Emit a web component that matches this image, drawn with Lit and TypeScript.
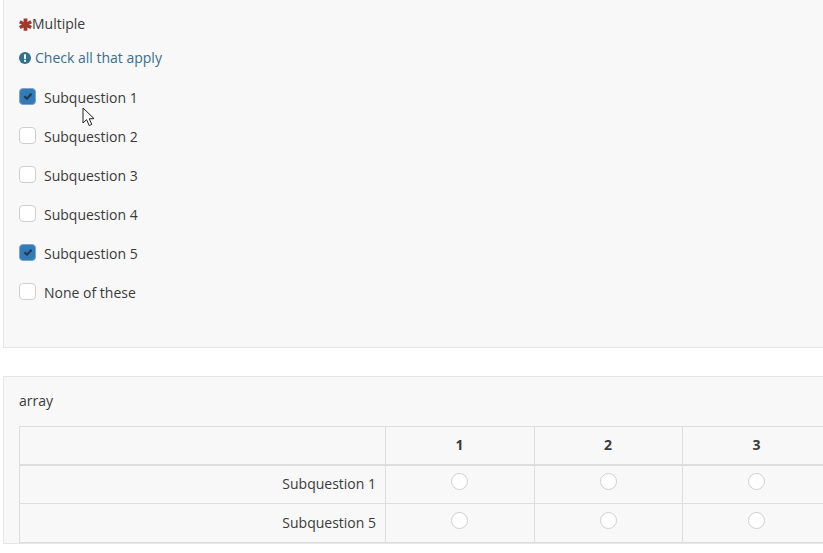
import { html, css, LitElement, svg } from 'lit';
import { customElement } from 'lit/decorators.js';

const choices = [
    { label: 'Subquestion 1', checked: true },
    { label: 'Subquestion 2', checked: false },
    { label: 'Subquestion 3', checked: false },
    { label: 'Subquestion 4', checked: false },
    { label: 'Subquestion 5', checked: true },
    { label: 'None of these', checked: false },
];

const arrayRows = ['Subquestion 1', 'Subquestion 5'];
const arrayCols = ['1', '2', '3'];

const checkMark = svg`<path d="M2.400 6.200 L4.900 8.700 L9.600 3.700" fill="none" stroke="#1d3a56" stroke-width="2.200"/>`;

@customElement('app-root')
export class AppRoot extends LitElement {
    static styles = css`
    :host {
        display: block;
        position: relative;
        width: 823px;
        height: 553px;
        overflow: hidden;
        background: #fff;
        color: #3b3b3b;
        font-family: "Open Sans", sans-serif;
        font-size: 14px;
        line-height: 20px;
    }
    .page {
        display: flex;
        flex-direction: column;
        gap: 28px;
        width: 900px;
        margin-left: 3px;
    }
    .panel {
        background: #f8f8f8;
        border: 1px solid #e6e6e6;
        box-sizing: border-box;
    }
    .multiple {
        border-top: none;
        height: 348px;
        padding: 14px 15px 0;
    }
    .title {
        display: flex;
        align-items: center;
    }
    .star {
        color: #a5362c;
        width: 13px;
        height: 13px;
        display: block;
    }
    .help {
        display: flex;
        align-items: center;
        gap: 4px;
        margin-top: 14px;
        color: #3a6f8c;
    }
    .help svg {
        width: 12px;
        height: 12px;
        display: block;
    }
    .choices {
        display: flex;
        flex-direction: column;
        gap: 19px;
        margin-top: 20px;
    }
    .choice {
        display: flex;
        align-items: center;
        gap: 8px;
    }
    .box {
        width: 17px;
        height: 17px;
        box-sizing: border-box;
        border: 1px solid #cfcfcf;
        border-radius: 4px;
        background: #fff;
        margin-top: -4px;
        display: flex;
        align-items: center;
        justify-content: center;
    }
    .box.on {
        background: #337ab7;
        border-color: #7aa5cc;
    }
    .box svg {
        width: 12px;
        height: 12px;
        display: block;
    }
    .array {
        padding: 14px 15px 0;
        height: 168px;
    }
    table {
        border-collapse: collapse;
        table-layout: fixed;
        width: 812px;
        margin-top: 15px;
    }
    th, td {
        border: 1px solid #ddd;
        padding: 0 1px 0 0;
        box-sizing: border-box;
    }
    th {
        height: 38px;
        border-bottom-width: 2px;
        font-weight: 700;
        font-size: 14px;
        text-align: center;
        padding-bottom: 1px;
    }
    td {
        height: 39px;
        text-align: center;
    }
    .name {
        text-align: right;
        padding: 0 9px 0 0;
    }
    .radio {
        display: block;
        width: 17px;
        height: 17px;
        box-sizing: border-box;
        margin: -5px auto 0;
        border: 1px solid #cfcfcf;
        border-radius: 50%;
        background: #fff;
    }
    .cursor {
        position: absolute;
        left: 82px;
        top: 107px;
        width: 13px;
        height: 20px;
    }
  `;

    render() {
        return html`
            <div class="page">
                <div class="panel multiple">
                    <div class="title">
                        <svg class="star" viewBox="0 0 13 13"><path fill="currentColor" d="M4.600 0.500h3.800v3.400l3-1.700 1.600 3-3 1.400 3 1.500-1.600 3-3-1.700v3.400H4.600V9.400l-3 1.700-1.600-3 3-1.500-3-1.400 1.600-3 3 1.700z"/></svg>
                        <span>Multiple</span>
                    </div>
                    <div class="help">
                        <svg viewBox="0 0 12 12"><circle cx="6" cy="6" r="6" fill="#31708f"/><rect x="5" y="2.300" width="2" height="4.600" fill="#f8f8f8"/><rect x="5" y="7.800" width="2" height="2" fill="#f8f8f8"/></svg>
                        <span>Check all that apply</span>
                    </div>
                    <div class="choices">
                        ${choices.map(c => html`
                            <div class="choice">
                                <span class=${c.checked ? 'box on' : 'box'}>
                                    ${c.checked ? html`<svg viewBox="0 0 12 12">${checkMark}</svg>` : ''}
                                </span>
                                <span>${c.label}</span>
                            </div>
                        `)}
                    </div>
                </div>
                <div class="panel array">
                    <div>array</div>
                    <table>
                        <colgroup>
                            <col style="width: 366px" />
                            <col style="width: 149px" />
                            <col style="width: 148px" />
                            <col style="width: 149px" />
                        </colgroup>
                        <thead>
                            <tr>
                                <th></th>
                                ${arrayCols.map(c => html`<th>${c}</th>`)}
                            </tr>
                        </thead>
                        <tbody>
                            ${arrayRows.map(r => html`
                                <tr>
                                    <td class="name">${r}</td>
                                    ${arrayCols.map(() => html`<td><span class="radio"></span></td>`)}
                                </tr>
                            `)}
                        </tbody>
                    </table>
                </div>
            </div>
            <svg class="cursor" viewBox="0 0 13 20">
                <path d="M1 1 V16 L4.600 12.600 L7.200 18.600 L9.800 17.400 L7.200 11.800 L12 11.600 Z" fill="#fff" stroke="#222" stroke-width="1"/>
            </svg>
        `;
    }
}
